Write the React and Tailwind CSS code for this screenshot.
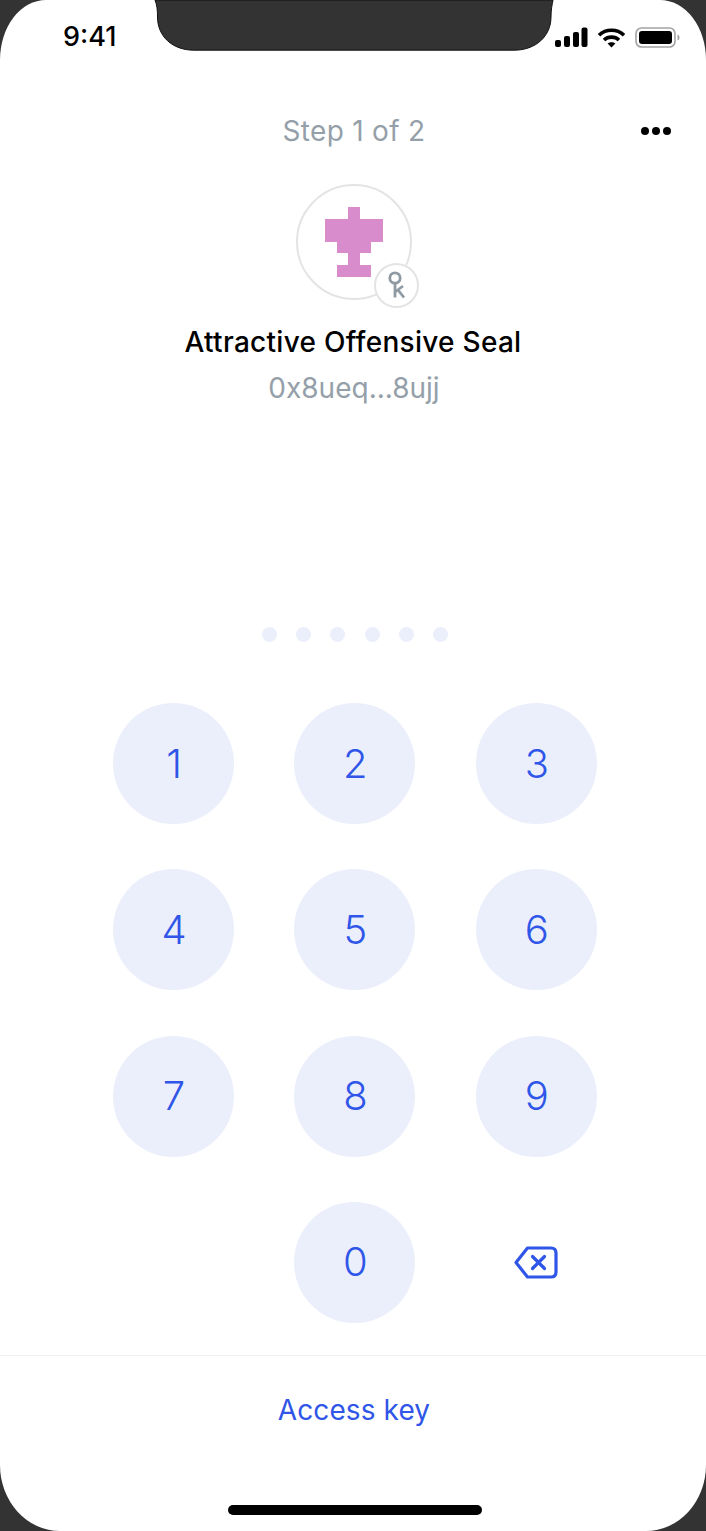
import React from 'react';

const keys = ['1', '2', '3', '4', '5', '6', '7', '8', '9'];

function SignalIcon() {
  return (
    <svg width="33" height="21" viewBox="0 0 33 21" fill="#000">
      <rect x="0" y="13" width="6" height="7" rx="2" />
      <rect x="9" y="9" width="6" height="11" rx="2" />
      <rect x="18" y="5" width="6" height="15" rx="2" />
      <rect x="26.5" y="0.5" width="6" height="19.5" rx="2" />
    </svg>
  );
}

function WifiIcon() {
  return (
    <svg width="29" height="21" viewBox="0 0 29 21" fill="none" stroke="#000" strokeWidth="3.6">
      <path d="M2 8.2 C9 1.6 20 1.6 27 8.2" />
      <path d="M7 13 C11 9.2 18 9.2 22 13" />
      <path d="M14.5 20.5 L10.6 16.6 C12.8 14.8 16.2 14.8 18.4 16.6 Z" fill="#000" stroke="none" />
    </svg>
  );
}

function BatteryIcon() {
  return (
    <svg width="45" height="21" viewBox="0 0 45 21" fill="none">
      <rect x="1" y="1" width="39" height="19" rx="5.5" stroke="#a3a3a3" strokeWidth="1.6" />
      <rect x="4" y="4" width="33" height="13" rx="3" fill="#000" />
      <path d="M42.5 7.5 C44 8 44.5 9 44.5 10.5 C44.5 12 44 13 42.5 13.5 Z" fill="#a3a3a3" />
    </svg>
  );
}

function Notch() {
  return (
    <svg className="absolute left-[154px] top-0" width="400" height="51" viewBox="0 0 400 51">
      <path
        d="M1 0 C3 5 3.5 10 3.5 17 C3.5 36 18 50.2 40 50.2 L360 50.2 C382 50.2 397 36 397 17 C397 10 398 5 399 0 Z"
        fill="#333333"
        stroke="#111111"
        strokeWidth="1"
      />
    </svg>
  );
}

function PixelSeal() {
  return (
    <svg width="58" height="70" viewBox="0 0 58 70" fill="#d98ccb">
      <rect x="23" y="0" width="12" height="12" />
      <rect x="0" y="12" width="58" height="23" />
      <rect x="12" y="35" width="34" height="11" />
      <rect x="23" y="46" width="12" height="12" />
      <rect x="12" y="58" width="34" height="12" />
    </svg>
  );
}

function KeyBadge() {
  return (
    <svg width="41" height="41" viewBox="2 2 41 41" fill="none" stroke="#8f9aa3" strokeWidth="2.8">
      <circle cx="21" cy="15" r="5.2" />
      <path d="M21 20 V34.5" />
      <path d="M21 29 L29 23" />
      <path d="M24 27 L30 34.5" />
    </svg>
  );
}

function BackspaceIcon() {
  return (
    <svg width="44" height="33" viewBox="0 0 44 33" fill="none" stroke="#2f56e8" strokeWidth="3.2" strokeLinejoin="round" strokeLinecap="round">
      <path d="M13.5 2 H37 Q42 2 42 7 V26 Q42 31 37 31 H13.5 L2 16.5 Z" />
      <path d="M18.5 10.5 L30.5 22.5 M30.5 10.5 L18.5 22.5" />
    </svg>
  );
}

function Key({ label }) {
  return (
    <button className="w-[121px] h-[121px] rounded-full bg-[#ebeffb] flex items-center justify-center pl-[1px] text-[40px] font-[350] text-[#2f56e8]">
      {label}
    </button>
  );
}

export default function App() {
  return (
    <div className="relative w-[706px] h-[1531px] bg-[#333333] overflow-hidden font-['Inter',sans-serif]">
      <div className="w-full h-full bg-white flex flex-col rounded-t-[46px_60px] rounded-b-[60px_66px]">
        {/* status bar */}
        <div className="flex items-start justify-between h-[110px] pt-[20px] pl-[63px] pr-[26px]">
          <span className="text-[27px] leading-[34px] font-medium text-black">9:41</span>
          <div className="flex items-center gap-[9px] pt-[7px]">
            <SignalIcon />
            <WifiIcon />
            <BatteryIcon />
          </div>
        </div>

        {/* header */}
        <div className="grid grid-cols-[1fr_auto_1fr] items-center px-[35px] h-[42px]">
          <span />
          <span className="ml-[2px] text-[28px] tracking-[0.3px] leading-[42px] text-[#949fa9]">Step 1 of 2</span>
          <div className="flex justify-end gap-[3px]">
            <span className="w-[8px] h-[8px] rounded-full bg-black" />
            <span className="w-[8px] h-[8px] rounded-full bg-black" />
            <span className="w-[8px] h-[8px] rounded-full bg-black" />
          </div>
        </div>

        {/* account */}
        <div className="flex flex-col items-center mt-[32px]">
          <div className="relative ml-[2px] w-[116px] h-[116px] rounded-full border-2 border-[#e4e4e4] flex items-center justify-center">
            <PixelSeal />
            <div className="absolute left-[76px] top-[77px] w-[45px] h-[45px] rounded-full bg-white border-2 border-[#e4e4e4] flex items-center justify-center">
              <KeyBadge />
            </div>
          </div>
          <span className="mt-[24px] text-[28px] tracking-[0.28px] leading-[36px] font-[450] text-black">Attractive Offensive Seal</span>
          <span className="mt-[10px] ml-[2px] text-[28px] leading-[36px] text-[#949fa9]">0x8ueq...8ujj</span>
        </div>

        {/* pin dots */}
        <div className="flex justify-center gap-[19.3px] mt-[221px] pl-[4px]">
          {[0, 1, 2, 3, 4, 5].map((d) => (
            <span key={d} className="w-[15px] h-[15px] rounded-full bg-[#ebeffb]" />
          ))}
        </div>

        {/* keypad */}
        <div className="grid grid-cols-[121px_121px_121px] gap-x-[60.4px] gap-y-[45.3px] ml-[113px] mt-[61px]">
          {keys.map((k) => (
            <Key key={k} label={k} />
          ))}
          <span />
          <Key label="0" />
          <div className="flex items-center justify-center">
            <BackspaceIcon />
          </div>
        </div>

        {/* footer */}
        <div className="mt-[32px] border-t border-[#eef0f3] flex flex-col items-center flex-1">
          <span className="mt-[36px] ml-[2px] text-[28px] tracking-[0.1px] leading-[36px] text-[#2f56e8]">Access key</span>
          <div className="mt-[77px] ml-[4px] w-[254px] h-[10px] rounded-full bg-black" />
        </div>
      </div>
      <Notch />
    </div>
  );
}
